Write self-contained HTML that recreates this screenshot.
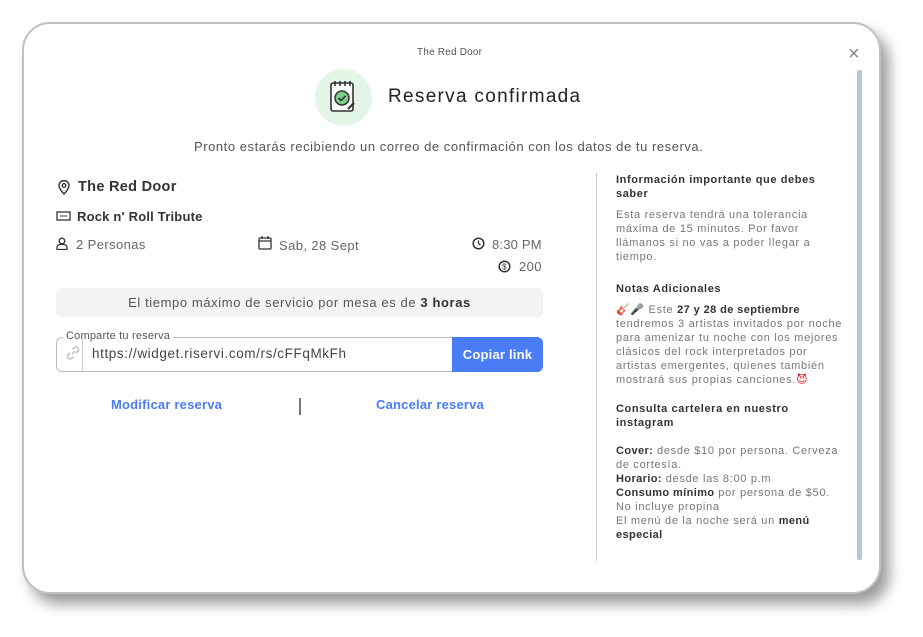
<!DOCTYPE html>
<html><head><meta charset="utf-8"><style>
*{box-sizing:border-box;margin:0;padding:0}
body{width:923px;height:637px;background:#fff;font-family:"Liberation Sans","DejaVu Sans",sans-serif;position:relative;overflow:hidden;color:#333;letter-spacing:.4px}
.card{position:absolute;left:22px;top:22px;width:859px;height:572px;border:2px solid #c0c0c0;border-radius:28px;background:#fff;box-shadow:8px 10px 14px rgba(0,0,0,.4)}
.a{position:absolute;white-space:nowrap}
.sb{position:absolute;left:857px;top:70px;width:5px;height:490px;background:#b9c3d9;border-radius:2px}
.r{font-size:11px;line-height:14px;color:#777;position:absolute;left:616px;width:232px;white-space:normal;letter-spacing:.7px}
.r b{color:#333;letter-spacing:.4px}
.h{color:#333;font-weight:bold;font-size:11px;letter-spacing:.6px}
svg{position:absolute}
</style></head><body>
<div class="card"></div>
<div class="a" style="left:417px;top:47px;font-size:10px;color:#555;letter-spacing:.2px">The Red Door</div>
<div class="a" style="left:848px;top:44px;font-size:20px;color:#888;line-height:20px">×</div>
<div class="sb"></div>
<div style="position:absolute;left:315px;top:69px;width:57px;height:57px;border-radius:50%;background:#e3f5e6"></div>
<svg style="left:328px;top:79px" width="30" height="36" viewBox="0 0 30 36"><rect x="3" y="4" width="22" height="28" rx="2" fill="#fff" stroke="#333" stroke-width="1.6"/><path d="M7 2v5M12 2v5M17 2v5M22 2v5" stroke="#333" stroke-width="1.6"/><circle cx="14" cy="19" r="7" fill="#7ccf8a" stroke="#333" stroke-width="1.5"/><path d="M10.5 19l2.5 2.5 4.5-4.5" stroke="#333" stroke-width="1.6" fill="none"/><path d="M20 30l6-6" stroke="#333" stroke-width="2"/></svg>
<div class="a" style="left:388px;top:86px;font-size:19px;color:#222;letter-spacing:1.3px">Reserva confirmada</div>
<div class="a" style="left:194px;top:139px;font-size:13px;color:#555;letter-spacing:.55px">Pronto estarás recibiendo un correo de confirmación con los datos de tu reserva.</div>
<svg style="left:57px;top:180px" width="14" height="15" viewBox="0 0 14 15"><path d="M7 14s5-5 5-8.5A5 5 0 0 0 2 5.5C2 9 7 14 7 14z" fill="none" stroke="#333" stroke-width="1.4"/><circle cx="7" cy="5.5" r="1.8" fill="none" stroke="#333" stroke-width="1.3"/></svg>
<div class="a" style="left:78px;top:179px;font-size:14.5px;font-weight:bold;color:#333;letter-spacing:.3px">The Red Door</div>
<svg style="left:56px;top:211px" width="15" height="11" viewBox="0 0 15 11"><rect x="1" y="1" width="13" height="8" fill="none" stroke="#333" stroke-width="1.3"/><path d="M4 5h7" stroke="#333"/></svg>
<div class="a" style="left:77px;top:209px;font-size:13px;font-weight:bold;color:#333;letter-spacing:.2px">Rock n' Roll Tribute</div>
<svg style="left:56px;top:237px" width="12" height="13" viewBox="0 0 12 13"><circle cx="6" cy="4" r="2.8" fill="none" stroke="#333" stroke-width="1.3"/><path d="M1 12.5v-2a3 3 0 0 1 3-3h4a3 3 0 0 1 3 3v2z" fill="none" stroke="#333" stroke-width="1.3"/></svg>
<div class="a" style="left:76px;top:237px;font-size:13px;color:#666">2 Personas</div>
<svg style="left:258px;top:236px" width="14" height="14" viewBox="0 0 14 14"><rect x="1" y="2" width="12" height="11" rx="1" fill="none" stroke="#333" stroke-width="1.3"/><path d="M1 5h12M4 0v3M10 0v3" stroke="#333" stroke-width="1.3"/></svg>
<div class="a" style="left:279px;top:238px;font-size:13px;color:#666">Sab, 28 Sept</div>
<svg style="left:472px;top:237px" width="13" height="13" viewBox="0 0 13 13"><circle cx="6.5" cy="6.5" r="5.3" fill="none" stroke="#333" stroke-width="1.5"/><path d="M6.5 3.5v3l2 1.5" stroke="#333" stroke-width="1.3" fill="none"/></svg>
<div class="a" style="left:492px;top:237px;font-size:13px;color:#666;letter-spacing:.2px">8:30 PM</div>
<svg style="left:498px;top:260px" width="13" height="13" viewBox="0 0 13 13"><circle cx="6.5" cy="6.5" r="5.3" fill="none" stroke="#333" stroke-width="1.5"/><text x="6.5" y="9.5" font-size="8" text-anchor="middle" fill="#333" font-family="Liberation Sans">$</text></svg>
<div class="a" style="left:519px;top:259px;font-size:13px;color:#666">200</div>
<div style="position:absolute;left:56px;top:288px;width:487px;height:29px;background:#f3f3f3;border-radius:5px;text-align:center;line-height:29px;font-size:13px;color:#555;letter-spacing:.6px">El tiempo máximo de servicio por mesa es de <b style="color:#333">3 horas</b></div>
<div style="position:absolute;left:56px;top:337px;width:487px;height:35px;border:1px solid #bbb;border-radius:6px"></div>
<div class="a" style="left:63px;top:330px;font-size:11px;color:#555;background:#fff;padding:0 3px;letter-spacing:.2px">Comparte tu reserva</div>
<div style="position:absolute;left:82px;top:338px;width:1px;height:33px;background:#ccc"></div>
<svg style="left:65px;top:345px" width="16" height="16" viewBox="0 0 16 16"><path d="M7 9l3-3M5 8l-2 2a2.5 2.5 0 0 0 3.5 3.5l2-2M11 8l2-2a2.5 2.5 0 0 0-3.5-3.5l-2 2" stroke="#bbb" stroke-width="1.4" fill="none"/></svg>
<div class="a" style="left:92px;top:346px;font-size:13.5px;color:#444;letter-spacing:.6px">https://widget.riservi.com/rs/cFFqMkFh</div>
<div style="position:absolute;left:452px;top:337px;width:91px;height:35px;background:#4a7cf6;border-radius:0 6px 6px 0;color:#fff;font-weight:bold;font-size:13px;text-align:center;line-height:35px;letter-spacing:.2px">Copiar link</div>
<div class="a" style="left:111px;top:397px;font-size:13px;color:#4a7cf6;font-weight:bold;letter-spacing:.2px">Modificar reserva</div>
<div style="position:absolute;left:299px;top:398px;width:2px;height:17px;background:#777"></div>
<div class="a" style="left:376px;top:397px;font-size:13px;color:#4a7cf6;font-weight:bold;letter-spacing:.2px">Cancelar reserva</div>
<div style="position:absolute;left:596px;top:173px;width:1px;height:388px;background:#ccc"></div>
<div class="r h" style="top:173px">Información importante que debes saber</div>
<div class="r" style="top:208px">Esta reserva tendrá una tolerancia máxima de 15 minutos. Por favor llámanos si no vas a poder llegar a tiempo.</div>
<div class="r h" style="top:282px">Notas Adicionales</div>
<div class="r" style="top:303px">🎸🎤 Este <b>27 y 28 de septiembre</b> tendremos 3 artistas invitados por noche para amenizar tu noche con los mejores clásicos del rock interpretados por artistas emergentes, quienes también mostrará sus propias canciones.<span style="color:#d22">😈</span></div>
<div class="r h" style="top:402px">Consulta cartelera en nuestro instagram</div>
<div class="r" style="top:444px"><b>Cover:</b> desde $10 por persona. Cerveza de cortesía.<br><b>Horario:</b> desde las 8:00 p.m<br><b>Consumo mínimo</b> por persona de $50. No incluye propina<br>El menú de la noche será un <b>menú especial</b></div>
</body></html>
